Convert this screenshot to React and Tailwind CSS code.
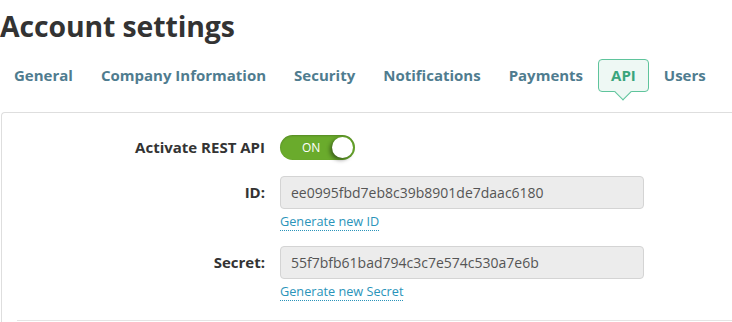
import { useState } from "react"

const tabs = ['General', 'Company Information', 'Security', 'Notifications', 'Payments', 'API', 'Users']

const Toggle = ({ on, onChange }) => {
  return (
    <button
      onClick={() => onChange(!on)}
      className="relative flex items-center w-[75px] h-[25px] rounded-full bg-[#6aab2c] shadow-[inset_0_1px_2px_rgba(0,0,0,0.2)]"
    >
      <span className="pl-[22px] text-[12px] text-white leading-none">{on ? 'ON' : 'OFF'}</span>
      <span className="absolute right-[2px] top-[2px] w-[21px] h-[21px] rounded-full bg-white shadow-[-2px_2px_4px_rgba(0,0,0,0.45)]"></span>
    </button>
  )
}

const Field = ({ label, value, link }) => {
  return (
    <div className="flex">
      <div className="w-[264px] h-[33px] flex items-center justify-end text-[15px] font-bold text-[#333]">{label}</div>
      <div className="ml-[15px] flex flex-col items-start">
        <div className="w-[364px] h-[33px] flex items-center px-[10px] bg-[#ececec] border border-[#d4d4d4] rounded-[4px] text-[14px] text-[#555]">
          {value}
        </div>
        <a href="#" className="mt-[3px] text-[12.7px] leading-[18px] text-[#2a94ba] border-b border-dotted border-[#2a94ba]">{link}</a>
      </div>
    </div>
  )
}

const App = () => {
  const [active, setActive] = useState('API')
  const [apiOn, setApiOn] = useState(true)

  return (
    <div className="w-[732px] h-[322px] overflow-hidden bg-white font-['Open_Sans',sans-serif]">
      <h1 className="pt-[7px] text-[28.4px] leading-[38px] font-bold text-[#333] tracking-[-0.1px]">Account settings</h1>

      <div className="mt-[14px] pl-[1px] flex gap-[2px]">
        {tabs.map((tab) => (
          <button
            key={tab}
            onClick={() => setActive(tab)}
            className={
              tab === active
                ? "relative h-[33px] px-[12px] flex items-center text-[15px] font-bold text-[#3aa57c] bg-[#eef8f4] border border-[#5fc49c] rounded-[4px]"
                : "relative h-[33px] px-[13px] flex items-center text-[15px] font-bold text-[#4f7c8f]"
            }
          >
            {tab}
            {tab === active && (
              <span className="absolute left-1/2 -bottom-[7px] -ml-[6px] w-[12px] h-[12px] rotate-45 bg-[#eef8f4] border-r border-b border-[#5fc49c]"></span>
            )}
          </button>
        ))}
      </div>

      <div className="mt-[20px] ml-[1px] w-[800px] h-[230px] border-t border-l border-[#dedede] rounded-tl-[4px]">
        <div className="pt-[22px] flex items-center">
          <div className="w-[263px] text-right text-[15px] font-bold text-[#333]">Activate REST API</div>
          <div className="ml-[15px]">
            <Toggle on={apiOn} onChange={setApiOn} />
          </div>
        </div>

        <div className="mt-[16px] -ml-[1px] flex flex-col gap-[15px]">
          <Field label="ID:" value="ee0995fbd7eb8c39b8901de7daac6180" link="Generate new ID" />
          <Field label="Secret:" value="55f7bfb61bad794c3c7e574c530a7e6b" link="Generate new Secret" />
        </div>

        <div className="mt-[19px] ml-[15px] border-t border-[#e4e4e4]"></div>
      </div>
    </div>
  )
}

export default App
